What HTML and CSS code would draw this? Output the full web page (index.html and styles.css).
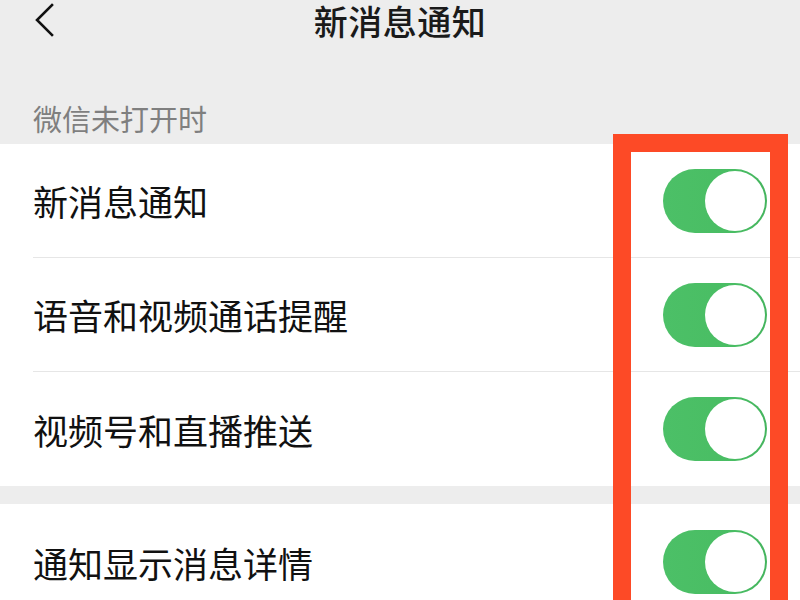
FILE: index.html
```html
<!DOCTYPE html>
<html lang="zh-CN">
<head>
    <meta charset="UTF-8">
    <meta name="viewport" content="width=device-width, initial-scale=1.0">
    <title>新消息通知</title>
    <link rel="stylesheet" href="styles.css">
</head>
<body>
    <div class="page">
        <!-- Top bar -->
        <div class="topbar">
            <span class="back">
                <svg width="22" height="36" viewBox="0 0 22 36">
                    <path d="M19 3 L4 18 L19 33" fill="none" stroke="#111" stroke-width="2.6" stroke-linecap="square"/>
                </svg>
            </span>
            <h1 class="title">新消息通知</h1>
        </div>

        <div class="section-label">微信未打开时</div>

        <div class="group">
            <div class="row">
                <div class="row-body">
                    <span class="row-text">新消息通知</span>
                    <span class="switch"><span class="knob"></span></span>
                </div>
            </div>
            <div class="row">
                <div class="row-body">
                    <span class="row-text">语音和视频通话提醒</span>
                    <span class="switch"><span class="knob"></span></span>
                </div>
            </div>
            <div class="row">
                <div class="row-body last">
                    <span class="row-text">视频号和直播推送</span>
                    <span class="switch"><span class="knob"></span></span>
                </div>
            </div>
        </div>

        <div class="group gap">
            <div class="row tall">
                <div class="row-body last">
                    <span class="row-text">通知显示消息详情</span>
                    <span class="switch"><span class="knob"></span></span>
                </div>
            </div>
        </div>

        <!-- Red highlight frame drawn over the switches -->
        <div class="highlight"></div>
    </div>
</body>
</html>
```

FILE: styles.css
```css
/* Page basics */
html, body {
    margin: 0;
    padding: 0;
    background-color: #ededed;
    font-family: "Noto Sans CJK SC", "Noto Sans", sans-serif;
}

.page {
    position: relative;
    width: 800px;
    height: 600px;
    overflow: hidden;
}

/* Header bar */
.topbar {
    height: 42px;
    padding-top: 2px;
    box-sizing: border-box;
    display: flex;
    align-items: flex-start;
    justify-content: center;
    position: relative;
}

.back {
    position: absolute;
    left: 33px;
    top: 2px;
}

.title {
    margin: 0;
    font-size: 34px;
    font-weight: 500;
    line-height: 38px;
    color: #1a1a1a;
    letter-spacing: 0.5px;
}

/* Grey caption above the list */
.section-label {
    padding: 58px 0 8px 33px;
    font-size: 29px;
    line-height: 36px;
    color: #7f7f7f;
}

/* White list */
.group {
    background: #fff;
}

.group.gap {
    margin-top: 18px;
}

.row {
    padding-left: 33px;
}

.row-body {
    height: 113px;
    display: flex;
    align-items: center;
    justify-content: space-between;
    padding-right: 33px;
    border-bottom: 1px solid #e6e6e6;
}

.row-body.last {
    border-bottom: none;
    height: 114px;
}

.row.tall .row-body {
    height: 116px;
}

.row-text {
    font-size: 35px;
    color: #111;
}

/* Switch in "on" state */
.switch {
    width: 104px;
    height: 64px;
    box-sizing: border-box;
    padding: 2px;
    border-radius: 32px;
    background: linear-gradient(90deg, #4cc067 0%, #49bd63 70%, #44b45d 100%);
    display: flex;
    justify-content: flex-end;
}

.knob {
    width: 60px;
    height: 60px;
    border-radius: 50%;
    background: #fff;
}

/* Annotation frame */
.highlight {
    position: absolute;
    left: 613px;
    top: 134px;
    width: 175px;
    height: 500px;
    box-sizing: border-box;
    border: 18px solid #fd4a26;
}
```
